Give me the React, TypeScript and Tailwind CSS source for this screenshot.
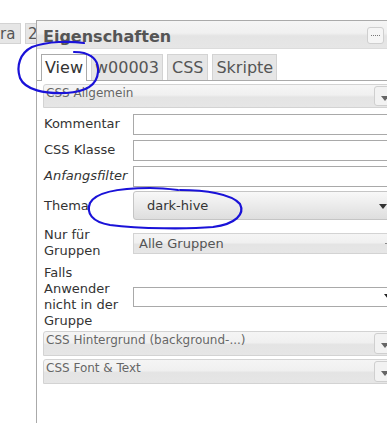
const grad = "bg-[linear-gradient(to_bottom,#f5f5f5_0%,#f0f0f0_45%,#e4e4e4_55%,#e6e6e6_100%)]";

function Arrow({ className = "" }: { className?: string }) {
  return (
    <svg width="8" height="5" viewBox="0 0 8 5" className={className}>
      <path d="M0 0 H8 L4 5 Z" fill="currentColor" />
    </svg>
  );
}

function AccordionHeader({ title }: { title: string }) {
  return (
    <div className={`relative h-full border border-[#d3d3d3] rounded-tl-[3px] ${grad}`}>
      <div className="pl-[2px] pt-[1px] text-[12px] leading-[14px] text-[#666]">{title}</div>
      <div className="absolute left-[330px] top-[1px] bottom-[1px] w-[30px] rounded-[3px] border border-[#cfcfcf] bg-[#f2f2f2] text-[#666]">
        <Arrow className="absolute left-[6px] top-[9px]" />
      </div>
    </div>
  );
}

function Row({ h, label, italic, children }: { h: string; label: React.ReactNode; italic?: boolean; children: React.ReactNode }) {
  return (
    <div className={`flex items-center ${h}`}>
      <div className={`w-[90px] shrink-0 pl-[1px] pr-[2px] text-[13px] leading-4 text-[#333] ${italic ? "italic" : ""}`}>{label}</div>
      <div className="flex-1">{children}</div>
    </div>
  );
}

function TextInput() {
  return <div className="h-[21px] border border-[#a9a9a9] bg-white" />;
}

export default function App() {
  return (
    <div className="relative w-[387px] h-[423px] overflow-hidden bg-white font-['DejaVu_Sans',sans-serif]">
      <div className="flex h-full">
        {/* tabs of the pane behind */}
        <div className="w-[36px] shrink-0 overflow-hidden pt-[23px]">
          <div className="flex gap-[4px] w-[80px]">
            <div className="w-[21px] h-[21px] border-y border-r border-[#d3d3d3] bg-[#e6e6e6] text-[15px] leading-[20px] text-[#555]">ra</div>
            <div className="w-[30px] h-[21px] border border-[#d3d3d3] bg-[#e6e6e6] pl-[2px] text-[15px] leading-[20px] text-[#555]">2</div>
          </div>
        </div>

        {/* dialog */}
        <div className="mt-[20px] w-[420px] shrink-0 border-l border-t border-[#aaa] bg-white">
          <div className={`flex h-[28px] items-start border-b border-[#dcdcdc] pl-[6px] ${grad}`}>
            <span className="pt-[6px] text-[16px] leading-[19px] font-bold text-[#555]">Eigenschaften</span>
            <div className="ml-[196px] mt-[6px] flex h-[17px] w-[17px] items-center justify-center rounded-[3px] border border-[#cfcfcf] bg-[#f5f5f5]">
              <div className="w-[9px] border-t border-dotted border-[#777]" />
            </div>
          </div>

          <div className="flex gap-[4px] border-b border-[#aaa] pl-[4px] pt-[5px]">
            <div className="relative -mb-[1px] h-[27px] border border-b-0 border-[#aaa] bg-white px-[3px] text-[16px] leading-[25px] text-[#333]">View</div>
            <div className="h-[26px] border border-b-0 border-[#d3d3d3] bg-[#e6e6e6] px-[3px] text-[16px] leading-[25px] text-[#555]">w00003</div>
            <div className="h-[26px] border border-b-0 border-[#d3d3d3] bg-[#e6e6e6] px-[4px] text-[16px] leading-[25px] text-[#555]">CSS</div>
            <div className="h-[26px] border border-b-0 border-[#d3d3d3] bg-[#e6e6e6] px-[3px] text-[16px] leading-[25px] text-[#555]">Skripte</div>
          </div>

          <div className="pl-[6px] pt-[3px]">
            <div className="h-[24px]">
              <AccordionHeader title="CSS Allgemein" />
            </div>

            <div className="mt-[3px]">
              <Row h="h-[26px]" label="Kommentar"><TextInput /></Row>
              <Row h="h-[26px]" label="CSS Klasse"><TextInput /></Row>
              <Row h="h-[26px]" label="Anfangsfilter" italic><TextInput /></Row>
              <Row h="h-[33px]" label="Thema">
                <div className="relative h-[29px] rounded-[3px] border border-[#c5c5c5] bg-[linear-gradient(to_bottom,#f8f8f8,#dedede)] pl-[13px] text-[13px] leading-[27px] text-[#333]">
                  dark-hive
                  <Arrow className="absolute left-[245px] top-[12px] text-[#333]" />
                </div>
              </Row>
              <Row h="h-[42px]" label="Nur für Gruppen">
                <div className={`relative h-[21px] border border-[#d3d3d3] pl-[5px] text-[13px] leading-[19px] text-[#555] ${grad}`}>
                  Alle Gruppen
                  <div className="absolute left-[251px] top-[9px] w-[5px] border-t border-[#888]" />
                </div>
              </Row>
              <Row h="h-[65px]" label="Falls Anwender nicht in der Gruppe">
                <div className="relative h-[20px] border border-[#a9a9a9] bg-white">
                  <Arrow className="absolute left-[250px] top-[6px] text-[#222]" />
                </div>
              </Row>
            </div>

            <div className="mt-[2px] h-[25px]">
              <AccordionHeader title="CSS Hintergrund (background-...)" />
            </div>
            <div className="mt-[3px] h-[25px]">
              <AccordionHeader title="CSS Font & Text" />
            </div>
          </div>
        </div>
      </div>

      {/* hand drawn marks */}
      <svg className="pointer-events-none absolute inset-0" width="387" height="423" viewBox="0 0 387 423">
        <path
          d="M84 43 C70 41 48 41 32 47 C20 53 16 66 20 78 C25 90 45 94 66 93 C84 92 97 86 98 72 C99 62 94 56 84 53 C80 52 77 52 74 52"
          fill="none" stroke="#1a12d8" strokeWidth="2.2" strokeLinecap="round"
        />
        <path
          d="M180 190 C205 190 232 194 240 204 C245 214 236 224 213 227 C190 229 140 229 110 225 C92 222 86 213 90 203 C96 192 120 188 150 188 C160 188 170 189 178 190"
          fill="none" stroke="#1a12d8" strokeWidth="2.2" strokeLinecap="round"
        />
      </svg>
    </div>
  );
}
